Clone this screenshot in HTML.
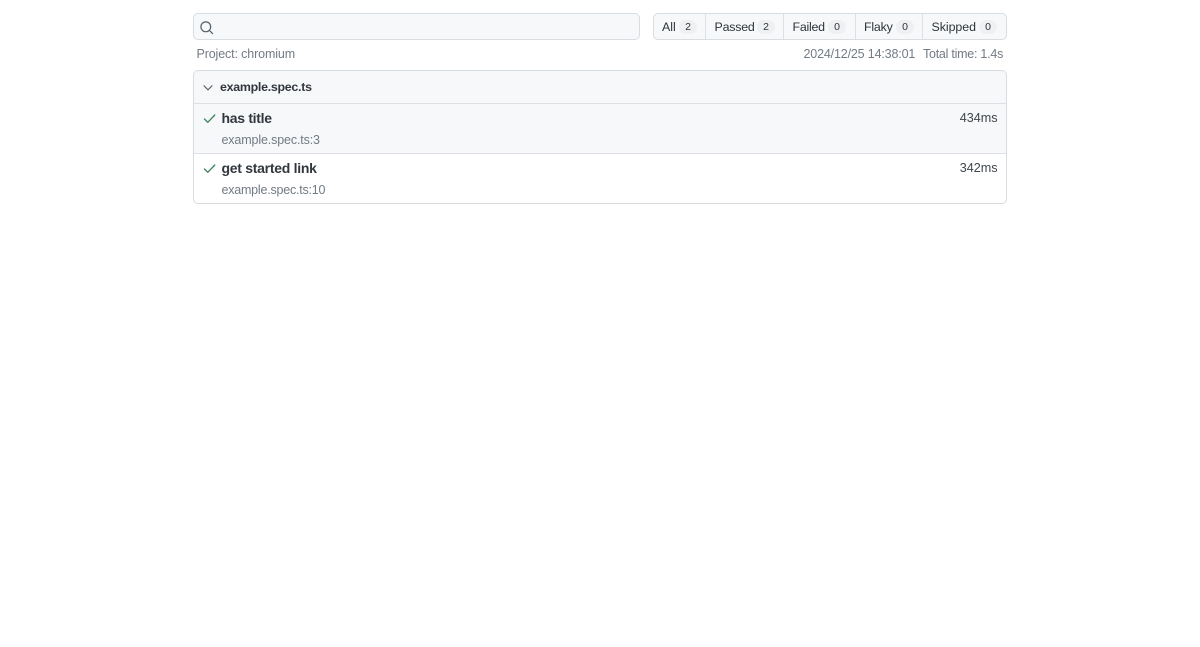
<!DOCTYPE html>
<html>
<head>
<meta charset="utf-8">
<style>
html,body{margin:0;padding:0;width:1200px;height:647px;overflow:hidden;background:#fff;font-family:"Liberation Sans",sans-serif;color:#24292f}
.a{position:absolute;white-space:nowrap}
.box{position:absolute;box-sizing:border-box;border:1px solid #d8dde2;border-radius:5px}
.tab{position:absolute;top:15px;height:25px;line-height:25px;font-size:12.4px;color:#2f343a}
.sep{position:absolute;top:14px;width:1px;height:25px;background:#dcdfe3}
.cnt{position:absolute;top:20px;height:14px;line-height:14px;border-radius:7px;background:#eef0f2;font-size:10.5px;text-align:center;color:#2f343a}
.gray{font-size:12.5px;color:#737b84;line-height:16px}
</style>
</head>
<body>
<div class="box" style="left:193px;top:13px;width:447px;height:27px;background:#f6f8fa"></div>
<svg class="a" style="left:199px;top:20px" width="15" height="15" viewBox="0 0 15 15" fill="none" stroke="#57606a" stroke-width="1.2"><circle cx="6.8" cy="6.8" r="4.9"/><path d="M10.4 10.4L13.6 13.6" stroke-linecap="round"/></svg>

<div class="box" style="left:653px;top:13px;width:354px;height:27px;background:#f6f8fa"></div>
<div class="sep" style="left:705px"></div>
<div class="sep" style="left:783px"></div>
<div class="sep" style="left:855px"></div>
<div class="sep" style="left:922px"></div>
<div class="tab" style="left:662px">All</div><div class="cnt" style="left:679px;width:18px">2</div>
<div class="tab" style="left:714.5px;letter-spacing:-.2px">Passed</div><div class="cnt" style="left:757px;width:18px">2</div>
<div class="tab" style="left:792.5px;letter-spacing:-.25px">Failed</div><div class="cnt" style="left:828px;width:18px">0</div>
<div class="tab" style="left:864px;letter-spacing:-.2px">Flaky</div><div class="cnt" style="left:896px;width:18px">0</div>
<div class="tab" style="left:931.5px;letter-spacing:-.05px">Skipped</div><div class="cnt" style="left:979px;width:18px">0</div>

<div class="a gray" style="left:196.5px;top:46px;letter-spacing:-.13px">Project: chromium</div>
<div class="a gray" style="left:803.5px;top:46px;letter-spacing:-.16px">2024/12/25 14:38:01</div>
<div class="a gray" style="left:923px;top:46px;letter-spacing:-.25px">Total time: 1.4s</div>

<div class="box" style="left:193px;top:70px;width:814px;height:134px;overflow:hidden;background:#fff">
  <div style="position:absolute;left:0;top:0;width:812px;height:32px;background:#f6f8fa;border-bottom:1px solid #dcdfe3"></div>
  <div style="position:absolute;left:0;top:33px;width:812px;height:49px;background:#f6f8fa;border-bottom:1px solid #dcdfe3"></div>
</div>
<svg class="a" style="left:202px;top:82px" width="12" height="12" viewBox="0 0 12 12" fill="none" stroke="#57606a" stroke-width="1.1"><path d="M2 3.800L6 7.800L10 3.800" stroke-linecap="round" stroke-linejoin="round"/></svg>
<div class="a" style="left:220px;top:79px;font-size:12.4px;font-weight:700;letter-spacing:-.27px;line-height:16px;color:#32373d">example.spec.ts</div>

<svg class="a" style="left:202px;top:112px" width="15" height="14" viewBox="0 0 15 14" fill="none" stroke="#3a8257" stroke-width="1.3"><path d="M2.5 7L5.800 10.300L12.800 3" stroke-linecap="round" stroke-linejoin="round"/></svg>
<div class="a" style="left:221.500px;top:109px;font-size:14px;font-weight:700;letter-spacing:-.3px;line-height:18px;color:#32373d">has title</div>
<div class="a gray" style="left:221.500px;top:132px;letter-spacing:-.14px">example.spec.ts:3</div>
<div class="a" style="right:202.500px;top:110px;font-size:12.600px;line-height:17px;color:#3f454c">434ms</div>

<svg class="a" style="left:202px;top:162px" width="15" height="14" viewBox="0 0 15 14" fill="none" stroke="#3a8257" stroke-width="1.3"><path d="M2.5 7L5.800 10.300L12.800 3" stroke-linecap="round" stroke-linejoin="round"/></svg>
<div class="a" style="left:221.500px;top:159px;font-size:14px;font-weight:700;letter-spacing:-.28px;line-height:18px;color:#32373d">get started link</div>
<div class="a gray" style="left:221.500px;top:182px;letter-spacing:-.22px">example.spec.ts:10</div>
<div class="a" style="right:202.500px;top:160px;font-size:12.600px;line-height:17px;color:#3f454c">342ms</div>
</body>
</html>
